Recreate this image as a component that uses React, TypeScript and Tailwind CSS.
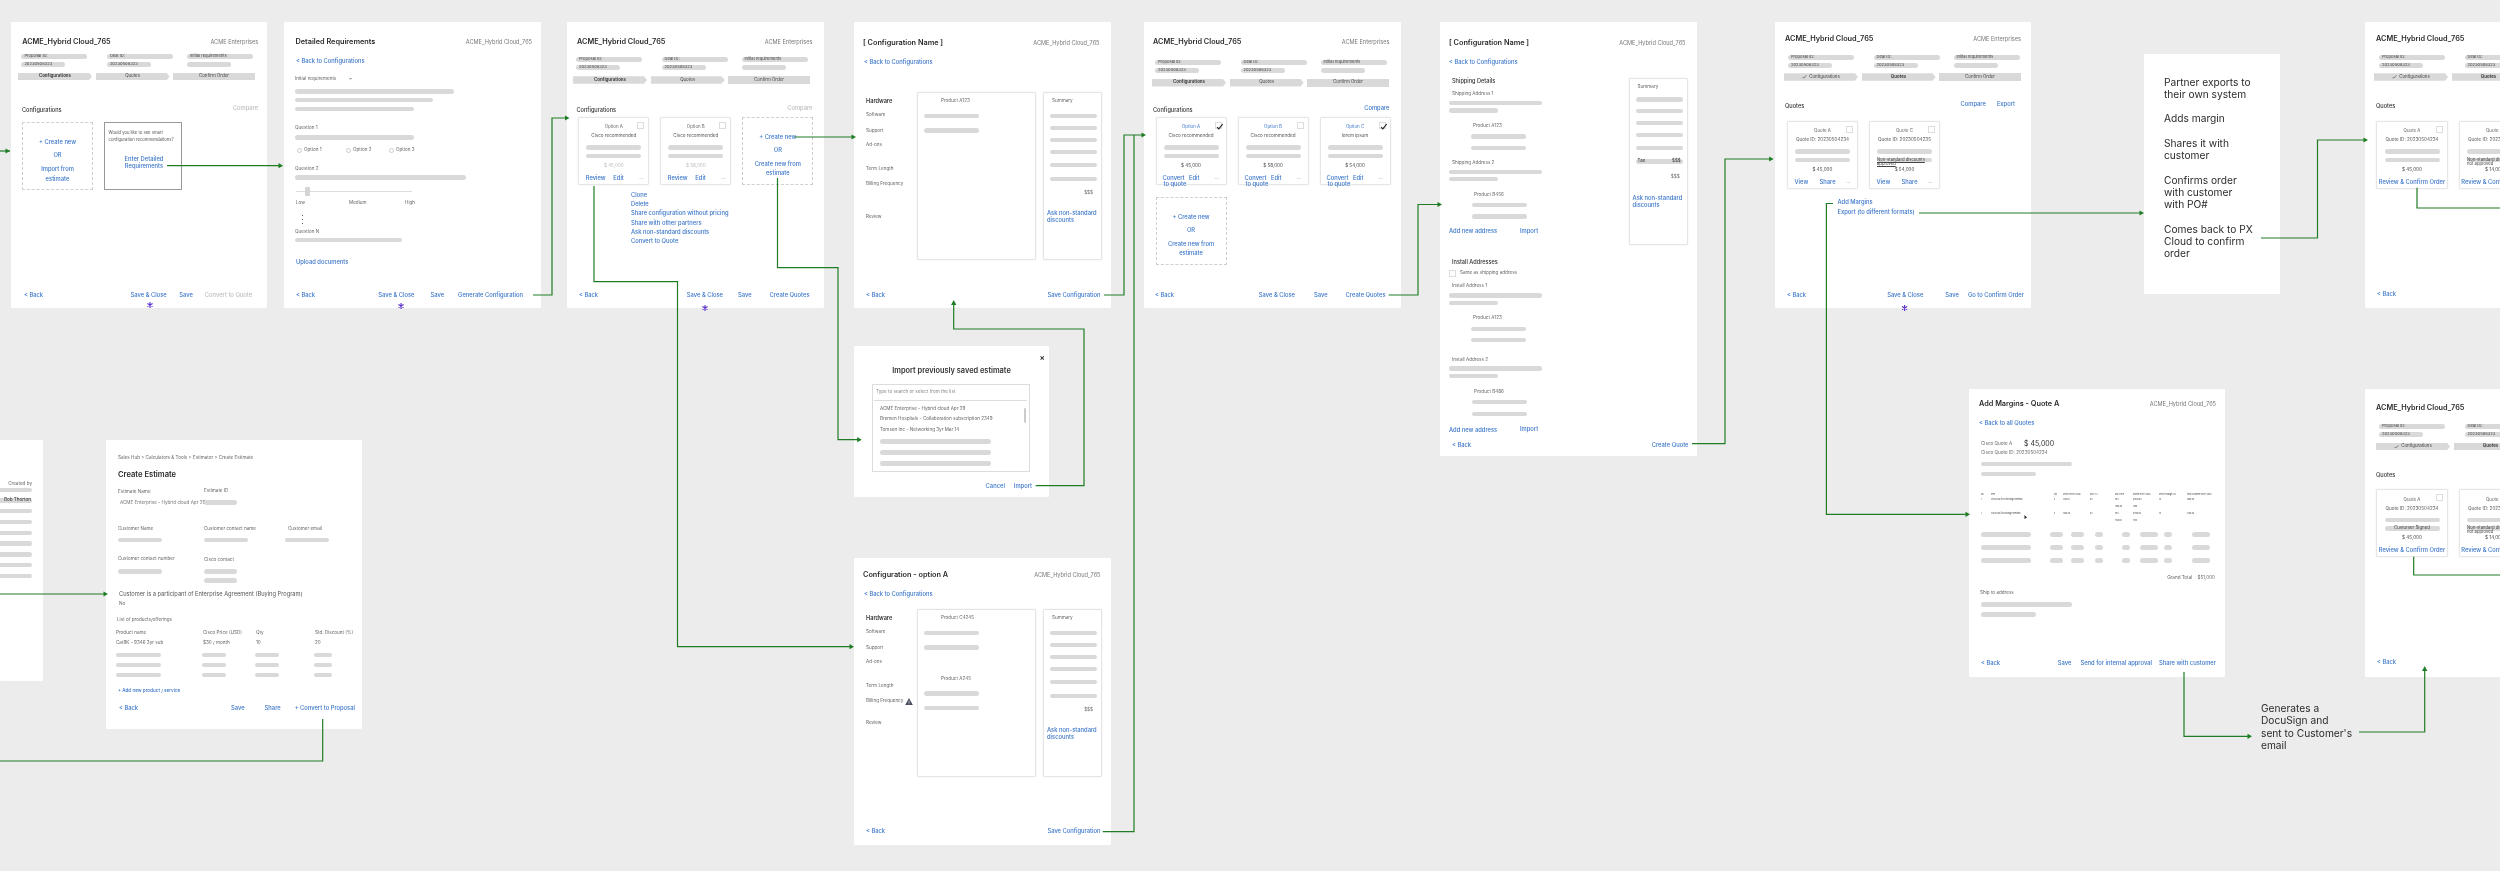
import React from "react";

type P = { c?: string; children?: React.ReactNode };

const L = ({ c = "", children }: P) => (
  <div className={"leading-[6px] text-[4.6px] text-[#666] whitespace-nowrap " + c}>{children}</div>
);
const H = ({ c = "", children }: P) => (
  <div className={"leading-[6px] text-[5.6px] font-medium text-[#333] whitespace-nowrap " + c}>{children}</div>
);
const A = ({ c = "", children }: P) => (
  <div className={"leading-[6px] text-[5.8px] font-medium text-[#3b76c8] whitespace-nowrap " + c}>{children}</div>
);
const Off = ({ c = "", children }: P) => (
  <div className={"leading-[6px] text-[5.8px] font-medium text-[#bdbdbd] whitespace-nowrap " + c}>{children}</div>
);
const B = ({ c = "", children }: P) => (
  <div className={"h-[4.5px] rounded-full bg-[#d9d9d9] " + c}>{children}</div>
);
const Frame = ({ c = "", children }: P) => (
  <div className={"absolute flex flex-col bg-white rounded-[1px] " + c}>{children}</div>
);
const Foot = ({ c = "", children }: P) => <div className={"mt-auto flex " + c}>{children}</div>;

const Head = ({ title, right, c = "" }: { title: string; right: string; c?: string }) => (
  <div className={"flex items-center justify-between " + c}>
    <div className="leading-[10px] text-[7.3px] font-semibold text-[#2a2a2a] whitespace-nowrap">{title}</div>
    <div className="leading-[10px] text-[5.6px] text-[#777] whitespace-nowrap">{right}</div>
  </div>
);

const PillText = ({ children }: P) => (
  <div className="pl-[3px] leading-[4.7px] text-[4.1px] text-[#444] whitespace-nowrap">{children}</div>
);

const Deal = ({ pills, steps, check, active }: { pills: string; steps: string; check?: boolean; active: number }) => (
  <>
    <div className={"grid grid-cols-[85.5px_80px_66px] " + pills}>
      <div>
        <div className="h-[4.7px] w-[66px] rounded-full bg-[#d9d9d9]"><PillText>Proposal ID:</PillText></div>
        <div className="mt-[3.4px] h-[4.7px] w-[44px] rounded-full bg-[#d9d9d9]"><PillText>20230508323</PillText></div>
      </div>
      <div>
        <div className="h-[4.7px] w-[66px] rounded-full bg-[#d9d9d9]"><PillText>Deal ID:</PillText></div>
        <div className="mt-[3.4px] h-[4.7px] w-[44px] rounded-full bg-[#d9d9d9]"><PillText>20230508323</PillText></div>
      </div>
      <div>
        <div className="h-[4.7px] w-[66px] rounded-full bg-[#d9d9d9]"><PillText>Initial requirements</PillText></div>
        <div className="mt-[3.4px] h-[4.7px] w-[44px] rounded-full bg-[#d9d9d9]" />
      </div>
    </div>
    <div className={"flex gap-[3.6px] " + steps}>
      {["Configurations", "Quotes"].map((s, i) => (
        <div
          key={s}
          className={
            "flex h-[7.6px] w-[74px] items-center justify-center bg-[#d9d9d9] text-[4.4px] text-[#444] [clip-path:polygon(0_0,calc(100%-3px)_0,100%_50%,calc(100%-3px)_100%,0_100%)] " +
            (active === i ? "font-bold" : "")
          }
        >
          {check && i === 0 ? (
            <svg viewBox="0 0 10 8" className="mr-[2px] h-[3.6px] w-[5px]"><path d="M1 5l2 2 6-6" fill="none" stroke="#333" strokeWidth="1.4" /></svg>
          ) : null}
          {s}
        </div>
      ))}
      <div className="flex h-[7.6px] w-[81.5px] items-center justify-center bg-[#d9d9d9] text-[4.4px] text-[#444]">Confirm Order</div>
    </div>
  </>
);

const Check = ({ on }: { on?: boolean }) => (
  <div className="absolute right-[4px] top-[4px] h-[7px] w-[7px] border-[0.5px] border-[#ddd]">
    {on ? (
      <svg viewBox="0 0 10 10" className="h-[7px] w-[7px]"><path d="M1.5 6l2.5 2.5L9.5 1.5" fill="none" stroke="#222" strokeWidth="1.6" /></svg>
    ) : null}
  </div>
);

const Card = ({
  title,
  sub,
  price,
  dark,
  blue,
  on,
  second,
  links,
  c = "",
}: {
  title: string;
  sub: string;
  price: string;
  dark?: boolean;
  blue?: boolean;
  on?: boolean;
  second?: React.ReactNode;
  links: React.ReactNode;
  c?: string;
}) => (
  <div className={"relative h-[68px] w-[71px] shrink-0 rounded-[1px] border-[0.5px] border-[#e6e6e6] shadow-[0_0_2px_rgba(0,0,0,0.08)] " + c}>
    <Check on={on} />
    <div className={"mt-[6.5px] text-center leading-[6px] text-[4.4px] " + (blue ? "text-[#3b76c8]" : "text-[#666]")}>{title}</div>
    <div className="mt-[3px] text-center leading-[6px] text-[4.6px] text-[#555]">{sub}</div>
    <div className="mt-[5.8px] flex flex-col items-center">
      <B c="w-[55px]" />
      <div className="mt-[3.9px]">{second ?? <B c="w-[55px]" />}</div>
    </div>
    <div className={"mt-[4.8px] text-center leading-[6px] text-[4.6px] " + (dark ? "text-[#444]" : "text-[#bbb]")}>{price}</div>
    <div className="mt-[6px]">{links}</div>
  </div>
);

const Dots = () => <div className="leading-[6px] text-[5px] text-[#999]">···</div>;

const ReviewLinks = () => (
  <div className="flex pl-[6.5px]">
    <A c="w-[27.5px]">Review</A>
    <A c="w-[26px]">Edit</A>
    <Dots />
  </div>
);
const ConvertLinks = () => (
  <div className="flex pl-[6px]">
    <A c="w-[26.5px] h-[6px]">
      Convert
      <br />
      <span className="pl-[1px]">to quote</span>
    </A>
    <A c="w-[25.5px]">Edit</A>
    <Dots />
  </div>
);
const ViewLinks = () => (
  <div className="flex pl-[6.5px]">
    <A c="w-[25px]">View</A>
    <A c="w-[26.5px]">Share</A>
    <Dots />
  </div>
);
const ReviewConfirm = () => <A c="text-center">Review &amp; Confirm Order</A>;

const Dashed = ({ c = "", last = "Create new from" }: { c?: string; last?: string }) => (
  <div className={"flex h-[68px] w-[71px] shrink-0 flex-col items-center border-[0.5px] border-dashed border-[#cfcfcf] " + c}>
    <A c="mt-[16px]">+ Create new</A>
    <A c="mt-[7px]">OR</A>
    <A c="mt-[8px]">{last}</A>
    <A c="mt-[3.5px]">estimate</A>
  </div>
);

const Nav = ({ review, warn }: { review: string; warn?: boolean }) => (
  <div className="w-[63px] pl-[12px]">
    <H c="mt-[6.5px] font-semibold">Hardware</H>
    <L c="mt-[8px]">Software</L>
    <L c="mt-[10px]">Support</L>
    <L c="mt-[8px]">Ad-ons</L>
    <L c="mt-[17.5px]">Term Length</L>
    <div className="mt-[9px] flex items-center">
      <L>Billing Frequency</L>
      {warn ? (
        <svg viewBox="0 0 12 11" className="ml-[2px] h-[7px] w-[8px]">
          <path d="M6 0L12 11H0Z" fill="#4a4d5c" />
          <path d="M6 4v3.5M6 8.5v1.2" stroke="#fff" strokeWidth="1" />
        </svg>
      ) : null}
    </div>
    <L c={review}>Review</L>
  </div>
);

const Panel = ({ c = "", children }: P) => (
  <div className={"rounded-[1px] border-[0.5px] border-[#e4e4e4] shadow-[0_0_2px_rgba(0,0,0,0.08)] " + c}>{children}</div>
);

const SummaryBars = () => (
  <>
    <L c="mt-[5.5px] pl-[8px]">Summary</L>
    <div className="pl-[6px]">
      <B c="mt-[9.5px] w-[47px]" />
      <B c="mt-[7.5px] w-[47px]" />
      <B c="mt-[7.5px] w-[47px]" />
      <B c="mt-[7.5px] w-[47px]" />
      <B c="mt-[8.5px] w-[47px]" />
      <B c="mt-[9.5px] w-[47px]" />
    </div>
    <L c="mt-[9px] pr-[8px] text-right">$$$</L>
    <A c="mt-[13px] pl-[3px] !leading-[7px]">
      Ask non-standard
      <br />
      discounts
    </A>
  </>
);

const TblBars = ({ c = "" }: { c?: string }) => (
  <div className={"grid grid-cols-[69px_21px_24px_27px_18px_24px_28px_18px] " + c}>
    <B c="w-[50px]" />
    <B c="w-[13px]" />
    <B c="w-[13px]" />
    <B c="w-[7.5px]" />
    <B c="w-[8px]" />
    <B c="w-[18px]" />
    <B c="w-[8px]" />
    <B c="w-[18px]" />
  </div>
);

const Tiny = ({ c = "", cells }: { c?: string; cells: string[] }) => (
  <div className={"grid grid-cols-[10px_63px_9px_27px_25px_18px_26px_28px_38px] text-[1.9px] leading-[3px] text-[#333] " + c}>
    {cells.map((t, i) => (
      <div key={i} className="whitespace-nowrap">{t}</div>
    ))}
  </div>
);

const Est4 = ({ c = "" }: { c?: string }) => (
  <div className={"grid grid-cols-[86px_53px_59px_18px] " + c}>
    <B c="w-[45px]" />
    <B c="w-[24px]" />
    <B c="w-[24px]" />
    <B c="w-[18px]" />
  </div>
);

const green = "#1f7d25";
const lines: [string, [number, number] | null][] = [
  ["M0 151H10", [10, 151]],
  ["M167 165.7H282", [283, 165.7]],
  ["M533 295H552V118H568", [569.5, 118]],
  ["M794.6 137H854", [856, 137]],
  ["M594 186V281.7H677.5V646.7H852", [854, 646.7]],
  ["M777.5 178V267.7H838V439.7H860", [861.7, 439.7]],
  ["M1035.7 485.7H1084V329H953.7V303", null],
  ["M1104 295H1124V135H1144", [1146, 135]],
  ["M1102.7 831.7H1134V135", null],
  ["M1388.6 295H1418V204.5H1440", [1442, 204.5]],
  ["M1692 443.7H1725V159H1772", [1773.6, 159]],
  ["M1833 203.5H1826.4V514.3H1968", [1970, 514.3]],
  ["M1919 213H2142", [2144, 213]],
  ["M2261 238H2317.5V140H2366", [2368, 140]],
  ["M2417 187.7V208H2500", null],
  ["M2413.7 556.7V575H2500", null],
  ["M2184 672V736.3H2250", [2252, 736.3]],
  ["M2359 732H2424.7V669", null],
  ["M0 594H106", [108, 594]],
  ["M322.7 719V761H0", null],
];
const stars: [number, number][] = [
  [150, 305],
  [401, 306],
  [705, 308],
  [1904.6, 308],
];

export default function App() {
  return (
    <div className="relative h-[871px] w-[2500px] overflow-hidden bg-[#ececec] font-[Inter,sans-serif] blur-[0.35px]">
      {/* Frame 1 */}
      <Frame c="left-[10.7px] top-[21.7px] h-[286.5px] w-[256.5px]">
        <Head c="mt-[15.3px] pl-[11.5px] pr-[9px]" title="ACME_Hybrid Cloud_765" right="ACME Enterprises" />
        <Deal pills="ml-[10.7px] mt-[7px]" steps="ml-[7.3px] mt-[6px]" active={0} />
        <div className="mt-[25px] flex h-[8px] justify-between pl-[11.3px] pr-[9px]">
          <H c="mt-[2px]">Configurations</H>
          <Off>Compare</Off>
        </div>
        <div className="ml-[11.3px] mt-[9px] flex gap-[11px]">
          <Dashed last="Import from" />
          <div className="h-[68px] w-[78px] border-[0.5px] border-[#999]">
            <div className="ml-[3.5px] mt-[6px] text-[4.2px] leading-[7px] text-[#555] whitespace-nowrap">
              Would you like to see smart
              <br />
              configuration recommendations?
            </div>
            <A c="mt-[13px] text-center !leading-[6.5px] pl-[2px]">
              Enter Detailed
              <br />
              Requirements
            </A>
          </div>
        </div>
        <Foot c="mb-[10px] pl-[13.3px] pr-[15px]">
          <A>&lt; Back</A>
          <A c="ml-auto">Save &amp; Close</A>
          <A c="ml-[12.5px]">Save</A>
          <Off c="ml-[12px]">Convert to Quote</Off>
        </Foot>
      </Frame>

      {/* Frame 2 */}
      <Frame c="left-[284px] top-[21.7px] h-[286.5px] w-[257px]">
        <Head c="mt-[15.3px] pl-[11.5px] pr-[9px]" title="Detailed Requirements" right="ACME_Hybrid Cloud_765" />
        <div className="pl-[11px]">
          <A c="mt-[11px] pl-[1px]">&lt; Back to Configurations</A>
          <div className="mt-[12.5px] flex">
            <L c="w-[54px]">Initial requirements</L>
            <L>~</L>
          </div>
          <B c="mt-[6.8px] w-[159px]" />
          <B c="mt-[4px] w-[138px]" />
          <B c="mt-[4.3px] w-[119px]" />
          <L c="mt-[14.3px]">Question 1</L>
          <B c="mt-[4px] w-[119px]" />
          <div className="mt-[7.3px] flex h-[6px] items-center pl-[2px]">
            <div className="h-[5px] w-[5px] rounded-full border-[0.5px] border-[#ccc]" />
            <L c="ml-[2px] w-[42px]">Option 1</L>
            <div className="h-[5px] w-[5px] rounded-full border-[0.5px] border-[#ccc]" />
            <L c="ml-[2px] w-[36px]">Option 2</L>
            <div className="h-[5px] w-[5px] rounded-full border-[0.5px] border-[#ccc]" />
            <L c="ml-[2px]">Option 3</L>
          </div>
          <L c="mt-[12.5px]">Question 2</L>
          <B c="mt-[3.5px] w-[171px]" />
          <div className="relative ml-[1px] mt-[7.8px] flex h-[9px] w-[116px] items-center">
            <div className="h-[1px] w-full bg-[#ddd]" />
            <div className="absolute left-[9px] top-0 h-[9px] w-[5px] rounded-[1px] bg-[#d5d5d5]" />
          </div>
          <div className="ml-[1px] mt-[3.5px] flex">
            <L c="w-[53px]">Low</L>
            <L c="w-[56px]">Medium</L>
            <L>High</L>
          </div>
          <div className="ml-[6.5px] mt-[9px] flex h-[9px] w-[1px] flex-col justify-between">
            <div className="h-[1px] w-[1px] bg-[#555]" />
            <div className="h-[1px] w-[1px] bg-[#555]" />
            <div className="h-[1px] w-[1px] bg-[#555]" />
          </div>
          <L c="mt-[5px]">Question N</L>
          <B c="mt-[3px] w-[107px]" />
          <A c="mt-[16.8px] pl-[1px]">Upload documents</A>
        </div>
        <Foot c="mb-[10px] pl-[12px] pr-[18px]">
          <A>&lt; Back</A>
          <A c="ml-auto">Save &amp; Close</A>
          <A c="ml-[16px]">Save</A>
          <A c="ml-[14px]">Generate Configuration</A>
        </Foot>
      </Frame>

      {/* Frame 3 */}
      <Frame c="left-[567px] top-[21.7px] h-[286.5px] w-[256.5px]">
        <Head c="mt-[15.3px] pl-[10px] pr-[11px]" title="ACME_Hybrid Cloud_765" right="ACME Enterprises" />
        <Deal pills="ml-[9px] mt-[10.3px]" steps="ml-[6px] mt-[6.2px]" active={0} />
        <div className="mt-[21px] flex h-[8px] justify-between pl-[9.5px] pr-[11px]">
          <H c="mt-[2px]">Configurations</H>
          <Off>Compare</Off>
        </div>
        <div className="ml-[11.3px] mt-[4px] flex gap-[11px]">
          <Card title="Option A" sub="Cisco recommended" price="$ 45,000" links={<ReviewLinks />} />
          <Card title="Option B" sub="Cisco recommended" price="$ 58,000" links={<ReviewLinks />} />
          <Dashed />
        </div>
        <div className="ml-[64px] mt-[7px] flex flex-col gap-[3.3px]">
          <A>Clone</A>
          <A>Delete</A>
          <A>Share configuration without pricing</A>
          <A>Share with other partners</A>
          <A>Ask non-standard discounts</A>
          <A>Convert to Quote</A>
        </div>
        <Foot c="mb-[10px] pl-[12px] pr-[14px]">
          <A>&lt; Back</A>
          <A c="ml-auto">Save &amp; Close</A>
          <A c="ml-[15px]">Save</A>
          <A c="ml-[18px]">Create Quotes</A>
        </Foot>
      </Frame>

      {/* Frame 4 */}
      <Frame c="left-[854px] top-[21.7px] h-[286.5px] w-[256.5px]">
        <Head c="mt-[16.8px] pl-[9px] pr-[11px]" title="[ Configuration Name ]" right="ACME_Hybrid Cloud_765" />
        <A c="mt-[11px] pl-[10px]">&lt; Back to Configurations</A>
        <div className="mt-[26.5px] flex">
          <Nav review="mt-[27px]" />
          <Panel c="h-[168px] w-[119px]">
            <L c="mt-[5.5px] pl-[23px]">Product A123</L>
            <div className="pl-[6px]">
              <B c="mt-[9.5px] w-[55px]" />
              <B c="mt-[10px] w-[55px]" />
            </div>
          </Panel>
          <Panel c="ml-[7px] h-[168px] w-[59px]">
            <SummaryBars />
          </Panel>
        </div>
        <Foot c="mb-[10px] pl-[12px] pr-[10px]">
          <A>&lt; Back</A>
          <A c="ml-auto">Save Configuration</A>
        </Foot>
      </Frame>

      {/* Import modal */}
      <Frame c="left-[854px] top-[346px] h-[151px] w-[195px]">
        <div className="mt-[6.5px] flex justify-end pr-[4px] text-[8px] font-semibold leading-[8px] text-[#333]">×</div>
        <div className="mt-[5px] text-center text-[7.4px] font-semibold leading-[10px] text-[#333]">Import previously saved estimate</div>
        <div className="relative ml-[18px] mt-[8.5px] h-[88px] w-[158px] border-[0.5px] border-[#dcdcdc]">
          <L c="mt-[4px] pl-[3px] text-[#888]">Type to search or select from the list</L>
          <div className="ml-[1px] mt-[4.5px] h-[0.5px] w-[153px] bg-[#ddd]" />
          <div className="pl-[7px]">
            <L c="mt-[5.5px]">ACME Enterprise - Hybrid cloud Apr 29</L>
            <L c="mt-[4.5px]">Bremen Hospitals - Collaboration subscription 2349</L>
            <L c="mt-[5px]">Tomson Inc - Networking 3yr Mar 14</L>
            <B c="mt-[6px] w-[111px]" />
            <B c="mt-[6.5px] w-[111px]" />
            <B c="mt-[6.5px] w-[111px]" />
          </div>
          <div className="absolute right-[3px] top-[23px] h-[15px] w-[2px] rounded-full bg-[#ccc]" />
        </div>
        <Foot c="mb-[8px] justify-end gap-[9px] pr-[17px]">
          <A>Cancel</A>
          <A>Import</A>
        </Foot>
      </Frame>

      {/* Configuration option A */}
      <Frame c="left-[854px] top-[558px] h-[287px] w-[256.5px]">
        <Head c="mt-[12px] pl-[9px] pr-[10px]" title="Configuration - option A" right="ACME_Hybrid Cloud_765" />
        <A c="mt-[11px] pl-[10px]">&lt; Back to Configurations</A>
        <div className="mt-[11.5px] flex">
          <Nav review="mt-[15.5px]" warn />
          <Panel c="h-[168px] w-[119px]">
            <L c="mt-[5.5px] pl-[23px]">Product C4245</L>
            <div className="pl-[6px]">
              <B c="mt-[9.5px] w-[55px]" />
              <B c="mt-[10px] w-[55px]" />
            </div>
            <L c="mt-[26.5px] pl-[23px]">Product A245</L>
            <div className="pl-[6px]">
              <B c="mt-[9px] w-[55px]" />
              <B c="mt-[10px] w-[55px]" />
            </div>
          </Panel>
          <Panel c="ml-[7px] h-[168px] w-[59px]">
            <SummaryBars />
          </Panel>
        </div>
        <Foot c="mb-[11px] pl-[12px] pr-[10px]">
          <A>&lt; Back</A>
          <A c="ml-auto">Save Configuration</A>
        </Foot>
      </Frame>

      {/* Frame 5 */}
      <Frame c="left-[1144px] top-[21.7px] h-[286.5px] w-[256.5px]">
        <Head c="mt-[15.3px] pl-[9px] pr-[11px]" title="ACME_Hybrid Cloud_765" right="ACME Enterprises" />
        <Deal pills="ml-[11px] mt-[13px]" steps="ml-[8px] mt-[6.2px]" active={0} />
        <div className="mt-[18.3px] flex h-[8px] justify-between pl-[9px] pr-[11px]">
          <H c="mt-[2px]">Configurations</H>
          <A>Compare</A>
        </div>
        <div className="ml-[11.5px] mt-[4px] flex gap-[11px]">
          <Card blue dark on title="Option A" sub="Cisco recommended" price="$ 45,000" links={<ConvertLinks />} />
          <Card blue dark title="Option B" sub="Cisco recommended" price="$ 58,000" links={<ConvertLinks />} />
          <Card blue dark on title="Option C" sub="lorem ipsum" price="$ 54,000" links={<ConvertLinks />} />
        </div>
        <Dashed c="ml-[11.5px] mt-[12px]" />
        <Foot c="mb-[10px] pl-[11px] pr-[15px]">
          <A>&lt; Back</A>
          <A c="ml-auto">Save &amp; Close</A>
          <A c="ml-[19px]">Save</A>
          <A c="ml-[18px]">Create Quotes</A>
        </Foot>
      </Frame>

      {/* Frame 6 */}
      <Frame c="left-[1440px] top-[21.7px] h-[434px] w-[256.5px]">
        <Head c="mt-[16.8px] pl-[9px] pr-[11px]" title="[ Configuration Name ]" right="ACME_Hybrid Cloud_765" />
        <A c="mt-[11px] pl-[9px]">&lt; Back to Configurations</A>
        <div className="flex">
          <div className="w-[188.6px] pl-[9px]">
            <H c="mt-[12.5px] pl-[3px]">Shipping Details</H>
            <L c="mt-[7px] pl-[3px]">Shipping Address 1</L>
            <B c="mt-[4px] w-[93px]" />
            <B c="mt-[3px] w-[49px]" />
            <L c="mt-[10px] pl-[24px]">Product A123</L>
            <div className="pl-[22px]">
              <B c="mt-[5.5px] w-[55px]" />
              <B c="mt-[7px] w-[55px]" />
            </div>
            <L c="mt-[9.5px] pl-[3px]">Shipping Address 2</L>
            <B c="mt-[4px] w-[93px]" />
            <B c="mt-[2.5px] w-[49px]" />
            <L c="mt-[10.5px] pl-[25px]">Product B456</L>
            <div className="pl-[23px]">
              <B c="mt-[5px] w-[55px]" />
              <B c="mt-[7px] w-[55px]" />
            </div>
            <div className="mt-[9px] flex">
              <A c="w-[71px]">Add new address</A>
              <A>Import</A>
            </div>
            <H c="mt-[25px] pl-[3px]">Install Addresses</H>
            <div className="mt-[5px] flex h-[7px] items-center">
              <div className="h-[7px] w-[7px] border-[0.5px] border-[#ddd]" />
              <L c="ml-[4px]">Same as shipping address</L>
            </div>
            <L c="mt-[6px] pl-[3px]">Install Address 1</L>
            <B c="mt-[4.5px] w-[93px]" />
            <B c="mt-[3px] w-[49px]" />
            <L c="mt-[10px] pl-[24px]">Product A123</L>
            <div className="pl-[22px]">
              <B c="mt-[5.5px] w-[55px]" />
              <B c="mt-[6.5px] w-[55px]" />
            </div>
            <L c="mt-[14.5px] pl-[3px]">Install Address 2</L>
            <B c="mt-[3.5px] w-[93px]" />
            <B c="mt-[3px] w-[49px]" />
            <L c="mt-[10.5px] pl-[25px]">Product B486</L>
            <div className="pl-[23px]">
              <B c="mt-[5px] w-[55px]" />
              <B c="mt-[7.5px] w-[55px]" />
            </div>
            <div className="mt-[11px] flex">
              <A c="w-[71px]">Add new address</A>
              <A c="-mt-[1px]">Import</A>
            </div>
          </div>
          <Panel c="mt-[12.5px] h-[167.5px] w-[59px]">
            <L c="mt-[5.5px] pl-[8px]">Summary</L>
            <div className="pl-[6px]">
              <B c="mt-[7px] w-[47px]" />
              <B c="mt-[7px] w-[47px]" />
              <B c="mt-[7.5px] w-[47px]" />
              <B c="mt-[7.5px] w-[47px]" />
              <B c="mt-[8.5px] w-[47px]" />
              <B c="mt-[9px] flex w-[47px] justify-between px-[2px]">
                <PillTextTight>Tax</PillTextTight>
                <PillTextTight>$$$</PillTextTight>
              </B>
            </div>
            <L c="mt-[10px] pr-[7px] text-right">$$$</L>
            <A c="mt-[14px] pl-[3px] !leading-[7px]">
              Ask non-standard
              <br />
              discounts
            </A>
          </Panel>
        </div>
        <Foot c="mb-[8px] pl-[12px] pr-[8px]">
          <A>&lt; Back</A>
          <A c="ml-auto">Create Quote</A>
        </Foot>
      </Frame>

      {/* Frame 7 */}
      <Frame c="left-[1775px] top-[21.7px] h-[286.5px] w-[256px]">
        <Head c="mt-[12.8px] pl-[10px] pr-[10px]" title="ACME_Hybrid Cloud_765" right="ACME Enterprises" />
        <Deal pills="ml-[13px] mt-[10.5px]" steps="ml-[9px] mt-[5.5px]" active={1} check />
        <div className="mt-[20.5px] flex h-[8px] justify-between pl-[10px] pr-[16px]">
          <H c="mt-[2px]">Quotes</H>
          <div className="flex gap-[11px]">
            <A>Compare</A>
            <A>Export</A>
          </div>
        </div>
        <div className="ml-[12px] mt-[11.5px] flex gap-[11px]">
          <Card dark title="Quote A" sub="Quote ID: 20230504234" price="$ 45,000" links={<ViewLinks />} />
          <Card
            dark
            title="Quote C"
            sub="Quote ID: 20230504235"
            price="$ 54,000"
            links={<ViewLinks />}
            second={
              <B c="w-[55px]">
                <div className="text-[4.2px] leading-[4px] text-[#444] underline">
                  Non-standard discounts
                  <br />
                  approved
                </div>
              </B>
            }
          />
        </div>
        <div className="ml-[62.5px] mt-[10.5px] flex flex-col gap-[3.5px]">
          <A>Add Margins</A>
          <A>Export (to different formats)</A>
        </div>
        <Foot c="mb-[10px] pl-[12px] pr-[7px]">
          <A>&lt; Back</A>
          <A c="ml-auto">Save &amp; Close</A>
          <A c="ml-[22px]">Save</A>
          <A c="ml-[9px]">Go to Confirm Order</A>
        </Foot>
      </Frame>

      {/* Note */}
      <div className="absolute left-[2144px] top-[54px] h-[240px] w-[136px] bg-white pl-[20px] pt-[21.6px] text-[10.2px] leading-[12.25px] text-[#2b2b2b]">
        <div>Partner exports to<br />their own system</div>
        <div className="mt-[12.25px]">Adds margin</div>
        <div className="mt-[12.25px]">Shares it with<br />customer</div>
        <div className="mt-[12.25px]">Confirms order<br />with customer<br />with PO#</div>
        <div className="mt-[12.25px]">Comes back to PX<br />Cloud to confirm<br />order</div>
      </div>

      {/* Frame 8 */}
      <Frame c="left-[2365px] top-[21.7px] h-[286.5px] w-[256.5px]">
        <Head c="mt-[12.8px] pl-[11px] pr-[10px]" title="ACME_Hybrid Cloud_765" right="ACME Enterprises" />
        <Deal pills="ml-[14px] mt-[10.5px]" steps="ml-[9px] mt-[5.5px]" active={1} check />
        <H c="ml-[11px] mt-[22.5px]">Quotes</H>
        <div className="ml-[11px] mt-[11.5px] flex gap-[10.5px]">
          <Card c="!w-[72px]" dark title="Quote A" sub="Quote ID: 20230504234" price="$ 45,000" links={<ReviewConfirm />} />
          <Card
            c="!w-[72px]"
            dark
            title="Quote C"
            sub="Quote ID: 20230504235"
            price="$ 14,000"
            links={<ReviewConfirm />}
            second={
              <B c="w-[55px]">
                <div className="text-[4.2px] leading-[4px] text-[#444]">
                  Non-standard discounts
                  <br />
                  not approved
                </div>
              </B>
            }
          />
        </div>
        <Foot c="mb-[11px] pl-[12px]">
          <A>&lt; Back</A>
        </Foot>
      </Frame>

      {/* Add margins */}
      <Frame c="left-[1969px] top-[389px] h-[288px] w-[256px]">
        <Head c="mt-[10px] pl-[10px] pr-[9px]" title="Add Margins - Quote A" right="ACME_Hybrid Cloud_765" />
        <div className="pl-[12px]">
          <A c="mt-[11px] -ml-[2px]">&lt; Back to all Quotes</A>
          <div className="mt-[13.5px] flex h-[8px] items-center">
            <L c="w-[43px] text-[#444]">Cisco Quote A</L>
            <div className="text-[7px] leading-[8px] text-[#333]">$ 45,000</div>
          </div>
          <L c="mt-[2px] text-[#444]">Cisco Quote ID: 20230504234</L>
          <B c="mt-[6px] w-[91px]" />
          <B c="mt-[5.5px] w-[55px]" />
          <div className="mt-[17px]">
            <Tiny cells={["No.", "Item", "Qty", "Service Price (USD)", "Disc (%)", "Disc Price", "Partner Price (USD)", "Service Margin (%)", "Total Customer Price (USD)"]} />
            <div className="mt-[2px] grid auto-rows-[7px]">
              <Tiny cells={["1", "Cisco DNA for Switching Essentials", "5", "2000.12", "30", "70%", "$1500.00", "10", "1650.00"]} />
              <Tiny cells={["", "", "", "", "", "1500.00", "1500", "", ""]} />
              <Tiny cells={["2", "Cisco DNA for Routing Essentials", "5", "1500.00", "30", "70%", "$1100.00", "10", "1200.00"]} />
              <Tiny cells={["", "", "", "", "", "1100.00", "1100", "", ""]} />
            </div>
          </div>
          <TblBars c="mt-[6.2px]" />
          <TblBars c="mt-[8.5px]" />
          <TblBars c="mt-[8.5px]" />
          <L c="mt-[12.7px] pr-[10px] text-right text-[#444]">Grand Total &nbsp;&nbsp; $51,000</L>
          <L c="mt-[9px] -ml-[1px] text-[#444]">Ship to address</L>
          <B c="mt-[6px] w-[91px]" />
          <B c="mt-[5.5px] w-[55px]" />
        </div>
        <Foot c="mb-[11px] pl-[12px] pr-[9px]">
          <A>&lt; Back</A>
          <A c="ml-auto">Save</A>
          <A c="ml-[9px]">Send for internal approval</A>
          <A c="ml-[7px]">Share with customer</A>
        </Foot>
      </Frame>

      {/* Docusign text */}
      <div className="absolute left-[2261px] top-[702px] text-[10.2px] leading-[12.3px] text-[#2b2b2b]">
        Generates a
        <br />
        DocuSign and
        <br />
        sent to Customer&apos;s
        <br />
        email
      </div>

      {/* Frame 9 */}
      <Frame c="left-[2365px] top-[389px] h-[288px] w-[256.5px]">
        <Head c="mt-[14px] pl-[11px] pr-[10px]" title="ACME_Hybrid Cloud_765" right="ACME Enterprises" />
        <Deal pills="ml-[14px] mt-[11px]" steps="ml-[11px] mt-[6px]" active={1} check />
        <H c="ml-[11px] mt-[22px]">Quotes</H>
        <div className="ml-[11px] mt-[11px] flex gap-[10.5px]">
          <Card
            c="!w-[72px]"
            dark
            title="Quote A"
            sub="Quote ID: 20230504234"
            price="$ 45,000"
            links={<ReviewConfirm />}
            second={<B c="w-[55px] text-center text-[4.4px] leading-[4.5px] text-[#444]">Customer Signed</B>}
          />
          <Card
            c="!w-[72px]"
            dark
            title="Quote C"
            sub="Quote ID: 20230504235"
            price="$ 14,000"
            links={<ReviewConfirm />}
            second={
              <B c="w-[55px]">
                <div className="text-[4.2px] leading-[4px] text-[#444]">
                  Non-standard discounts
                  <br />
                  not approved
                </div>
              </B>
            }
          />
        </div>
        <Foot c="mb-[12px] pl-[12px]">
          <A>&lt; Back</A>
        </Foot>
      </Frame>

      {/* Estimate list, cut by the left edge */}
      <Frame c="left-0 top-[440px] h-[241px] w-[43px] items-end pr-[11px] overflow-hidden">
        <L c="mt-[41px]">Created by</L>
        <div className="flex w-[45px] flex-col">
          <B c="mt-[0.5px]" />
          <B c="mt-[6px] text-[4.6px] leading-[4.5px] text-right text-[#333] pr-[1px]">Bob Thorton</B>
          <B c="mt-[6px]" />
          <B c="mt-[6.5px]" />
          <B c="mt-[6.5px]" />
          <B c="mt-[6px]" />
          <B c="mt-[6.5px]" />
          <B c="mt-[6px]" />
          <B c="mt-[6.5px]" />
        </div>
      </Frame>

      {/* Create estimate */}
      <Frame c="left-[106px] top-[440px] h-[289px] w-[256px]">
        <div className="pl-[12px]">
          <L c="mt-[15px] text-[#333]">Sales Hub &gt; Calculators &amp; Tools &gt; Estimator &gt; Create Estimate</L>
          <div className="mt-[9px] text-[7.6px] font-semibold leading-[10px] text-[#2a2a2a]">Create Estimate</div>
          <div className="mt-[9px] grid grid-cols-[86px_84px_1fr]">
            <L>Estimate Name</L>
            <L c="-mt-[1px]">Estimate ID</L>
            <div />
          </div>
          <div className="mt-[5px] grid grid-cols-[86px_84px_1fr]">
            <L c="pl-[2px] text-[#777]">ACME Enterprise - Hybrid cloud Apr 29</L>
            <B c="w-[33px]" />
            <div />
          </div>
          <div className="mt-[20px] grid grid-cols-[86px_84px_1fr]">
            <L>Customer Name</L>
            <L>Customer contact name</L>
            <L>Customer email</L>
          </div>
          <div className="mt-[5.5px] grid grid-cols-[86px_81px_1fr]">
            <B c="w-[44px]" />
            <B c="w-[44px]" />
            <B c="w-[44px]" />
          </div>
          <div className="mt-[14px] grid grid-cols-[86px_84px_1fr]">
            <L>Customer contact number</L>
            <L c="mt-[1px]">Cisco contact</L>
            <div />
          </div>
          <div className="mt-[6px] grid grid-cols-[86px_84px_1fr]">
            <B c="w-[44px]" />
            <div>
              <B c="w-[33px]" />
              <B c="mt-[4.5px] w-[33px]" />
            </div>
            <div />
          </div>
          <div className="mt-[8.5px] pl-[1px] text-[5.7px] leading-[6px] text-[#555] whitespace-nowrap">
            Customer is a participant of Enterprise Agreement (Buying Program)
          </div>
          <L c="mt-[4px] pl-[1px]">No</L>
          <L c="mt-[10px] -ml-[1px] text-[#444]">List of products/offerings</L>
          <div className="-ml-[2px]">
            <div className="mt-[7px] grid grid-cols-[87px_53px_59px_57px]">
              <L>Product name</L>
              <L>Cisco Price (USD)</L>
              <L>Qty</L>
              <L>Std. Discount (%)</L>
            </div>
            <div className="mt-[4px] grid grid-cols-[87px_53px_59px_57px]">
              <L>Cat9K - 9346 3yr sub</L>
              <L>$30 / month</L>
              <L>10</L>
              <L>20</L>
            </div>
            <Est4 c="mt-[6.7px]" />
            <Est4 c="mt-[5.5px]" />
            <Est4 c="mt-[5.5px]" />
          </div>
          <div className="mt-[10.7px] text-[4.6px] font-medium leading-[6px] text-[#3b76c8] whitespace-nowrap">+ Add new product / service</div>
        </div>
        <Foot c="mb-[18px] pl-[13px] pr-[7px]">
          <A>&lt; Back</A>
          <A c="ml-auto">Save</A>
          <A c="ml-[20px]">Share</A>
          <A c="ml-[14px]">+ Convert to Proposal</A>
        </Foot>
      </Frame>

      {/* connectors */}
      <svg className="pointer-events-none absolute left-0 top-0" width="2500" height="871" viewBox="0 0 2500 871" fill="none">
        {lines.map(([d, tip], i) => (
          <g key={i}>
            <path d={d} stroke={green} strokeWidth="1.2" />
            {tip ? (
              <polygon points={`${tip[0]},${tip[1]} ${tip[0] - 4.5},${tip[1] - 2.6} ${tip[0] - 4.5},${tip[1] + 2.6}`} fill={green} />
            ) : null}
          </g>
        ))}
        <polygon points="953.7,300 951,305 956.4,305" fill={green} />
        <polygon points="2424.7,666 2422,671 2427.4,671" fill={green} />
        {stars.map(([x, y], i) => (
          <g key={i} stroke="#5a2fd0" strokeWidth="1.1">
            <path d={`M${x} ${y - 3}V${y + 3}M${x - 2.6} ${y - 1.5}L${x + 2.6} ${y + 1.5}M${x + 2.6} ${y - 1.5}L${x - 2.6} ${y + 1.5}`} />
          </g>
        ))}
        <polygon points="2024.5,515 2024.5,519 2027,517.5" fill="#222" />
      </svg>
    </div>
  );
}

function PillTextTight({ children }: P) {
  return <div className="text-[4.4px] font-medium leading-[4.5px] text-[#444]">{children}</div>;
}
